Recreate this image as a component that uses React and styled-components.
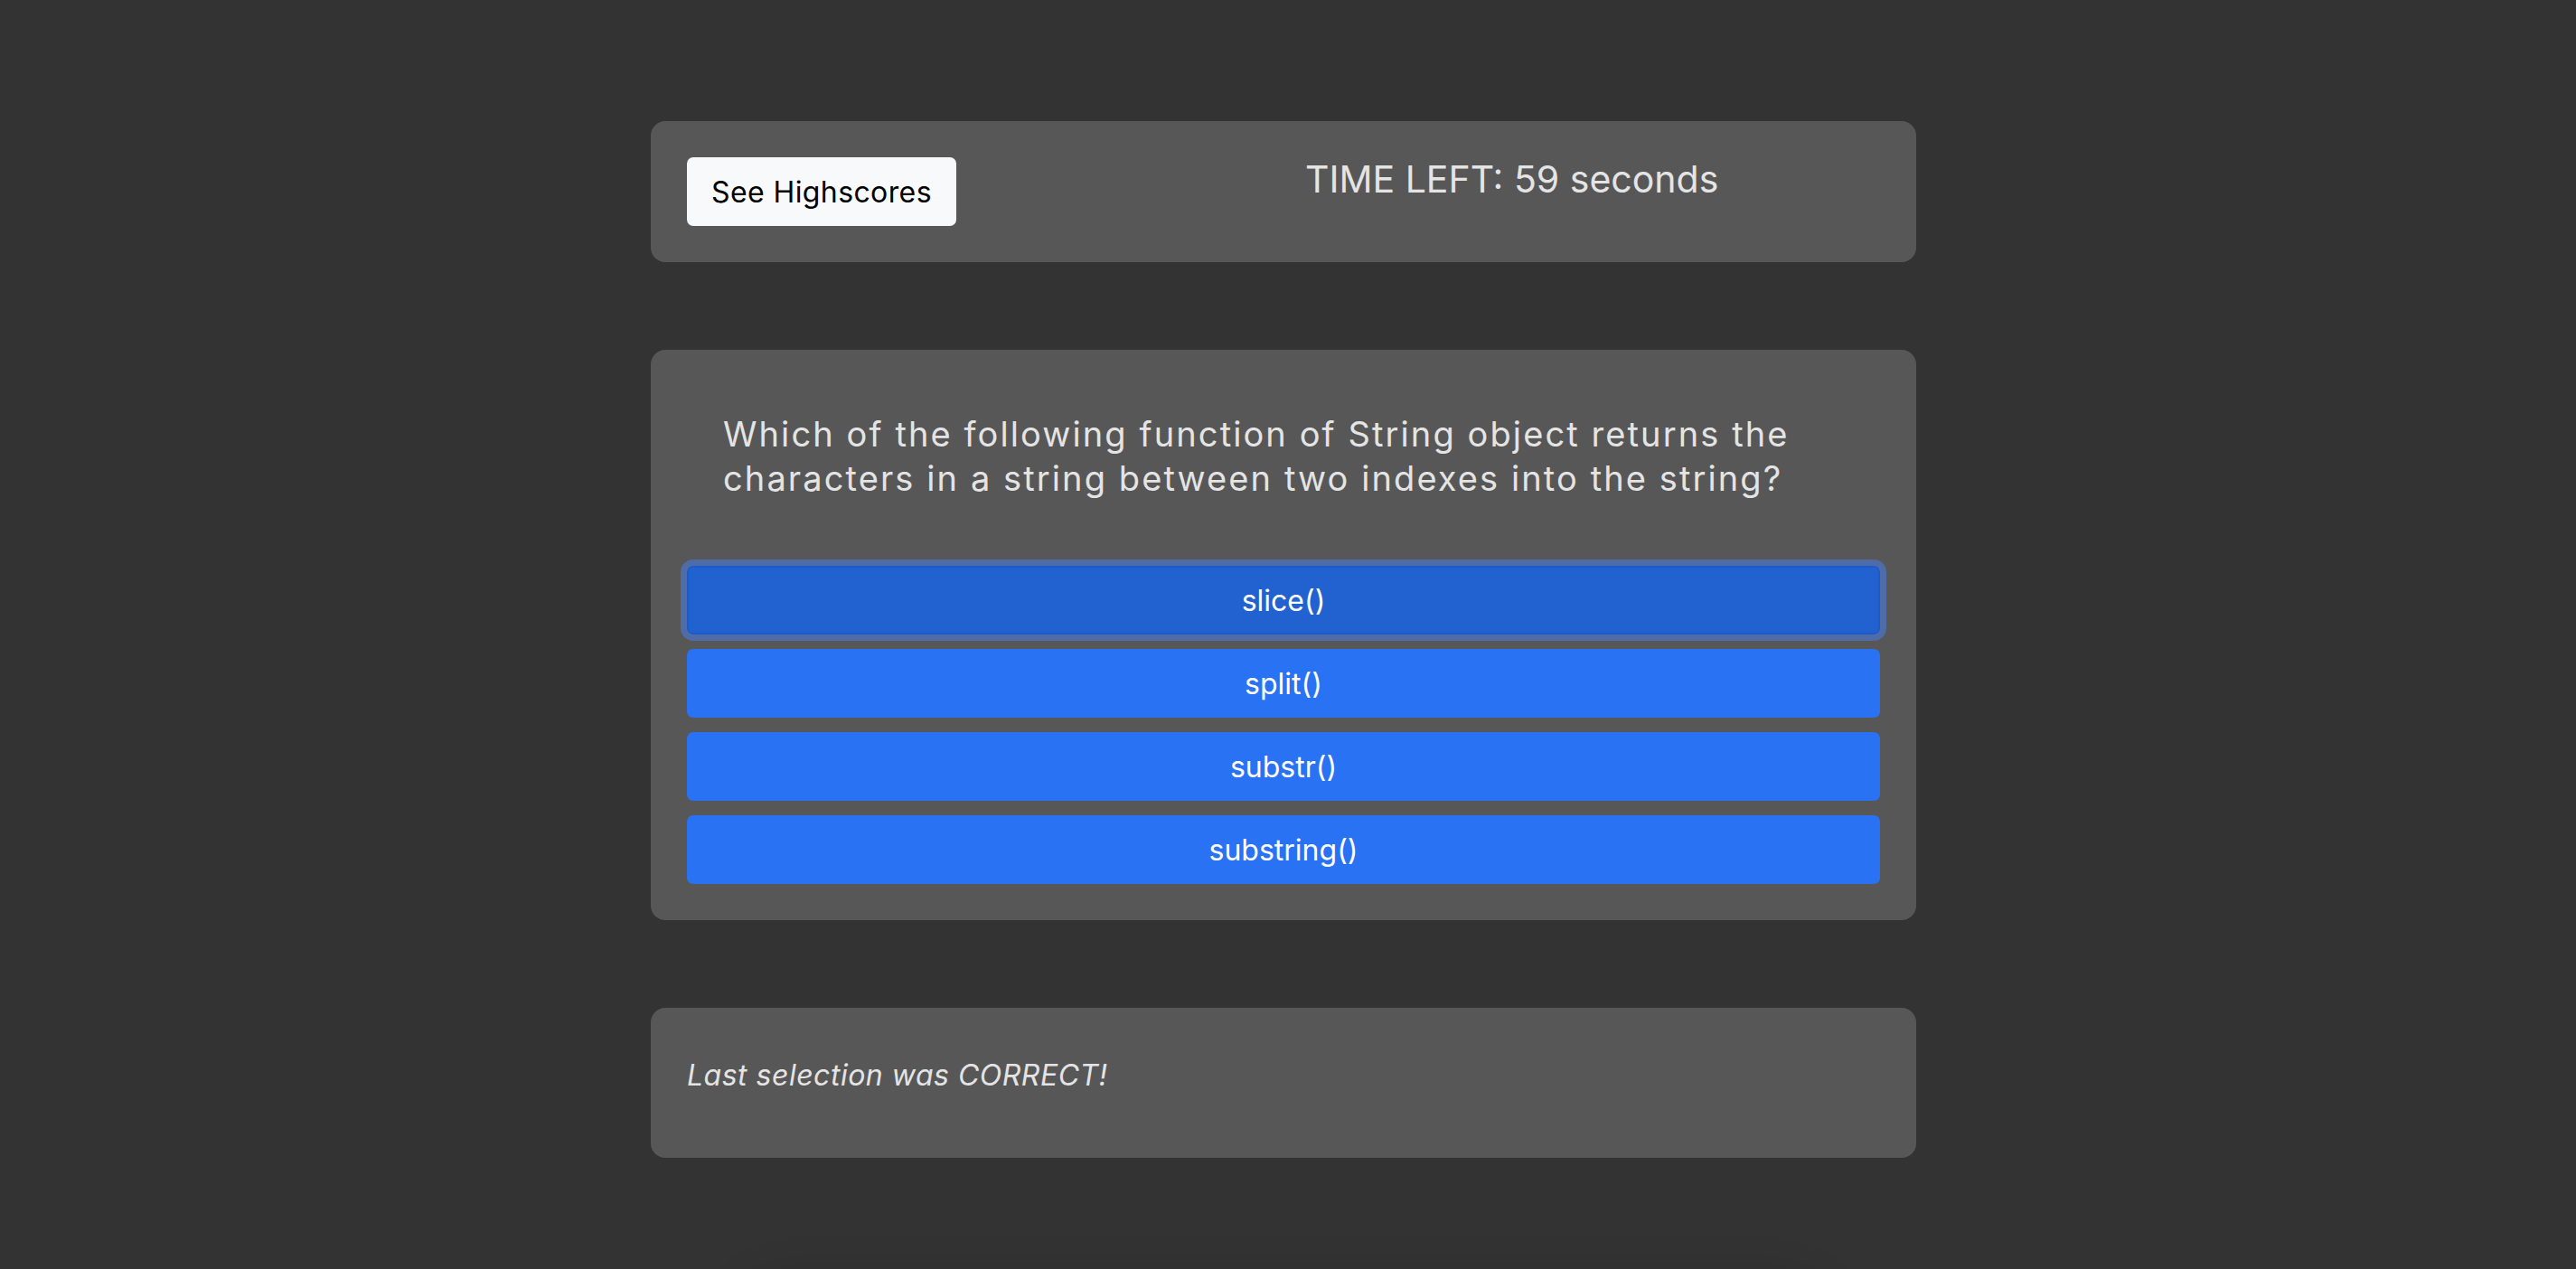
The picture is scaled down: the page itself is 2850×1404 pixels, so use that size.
import React from "react";
import styled, { createGlobalStyle } from "styled-components";

const GlobalStyle = createGlobalStyle`
  html, body {
    margin: 0;
    padding: 0;
    background: #333333;
    overflow: hidden;
  }
  body {
    font-family: Inter, "Noto Sans", "Liberation Sans", sans-serif;
    color: #e4e4e4;
  }
`;

const Page = styled.main`
  min-height: 1404px;
  display: flex;
  flex-direction: column;
  align-items: center;
  gap: 97px;
  padding: 134px 10px 0 0;
  box-sizing: border-box;
`;

const Card = styled.section`
  width: 1400px;
  box-sizing: border-box;
  background: #575757;
  border-radius: 16px;
  padding: ${(p) => p.$pad || "40px"};
`;

const TopBar = styled(Card)`
  display: flex;
  align-items: flex-start;
`;

const LightButton = styled.button`
  height: 76px;
  width: 298px;
  border: none;
  border-radius: 7px;
  background: #f8f9fa;
  color: #000;
  font-family: inherit;
  font-size: 32px;
  letter-spacing: 0.4px;
  cursor: pointer;
`;

const Timer = styled.div`
  margin: 0 0 0 386px;
  font-size: 41px;
  line-height: 49px;
  color: #e4e4e4;
`;

const Question = styled.h2`
  margin: 0 0 72px;
  padding: 29px 40px 0;
  font-weight: 400;
  font-size: 38px;
  line-height: 49px;
  letter-spacing: 2.1px;
  color: #e4e4e4;
`;

const Answers = styled.div`
  display: flex;
  flex-direction: column;
  gap: 16px;
`;

const Answer = styled.button`
  height: 76px;
  width: 100%;
  border-radius: 7px;
  border: 2px solid ${(p) => (p.$active ? "#1f5bc6" : "#2a72f4")};
  background: ${(p) => (p.$active ? "#2262d0" : "#2a72f4")};
  box-shadow: ${(p) => (p.$active ? "0 0 0 7px #4f6ca8" : "none")};
  color: #ffffff;
  font-family: inherit;
  font-size: 32px;
  cursor: pointer;
`;

const Feedback = styled.p`
  margin: 0;
  font-style: italic;
  font-size: 32px;
  line-height: 69px;
  letter-spacing: 0.5px;
  color: #e4e4e4;
`;

const Shadowed = styled.div`
  width: 1210px;
  height: 300px;
  margin-top: 40px;
  border-radius: 60px;
  background: #333333;
  box-shadow: 0 0 50px rgba(0, 0, 0, 0.22);
`;

const answers = ["slice()", "split()", "substr()", "substring()"];

export default function App() {
  return (
    <>
      <GlobalStyle />
      <Page>
        <TopBar>
          <LightButton>See Highscores</LightButton>
          <Timer>TIME LEFT: 59 seconds</Timer>
        </TopBar>
        <Card>
          <Question>
            Which of the following function of String object returns the
            characters in a string between two indexes into the string?
          </Question>
          <Answers>
            {answers.map((a, i) => (
              <Answer key={a} $active={i === 0}>
                {a}
              </Answer>
            ))}
          </Answers>
        </Card>
        <Card $pad="40px 40px 57px">
          <Feedback>Last selection was CORRECT!</Feedback>
        </Card>
        <Shadowed />
      </Page>
    </>
  );
}
